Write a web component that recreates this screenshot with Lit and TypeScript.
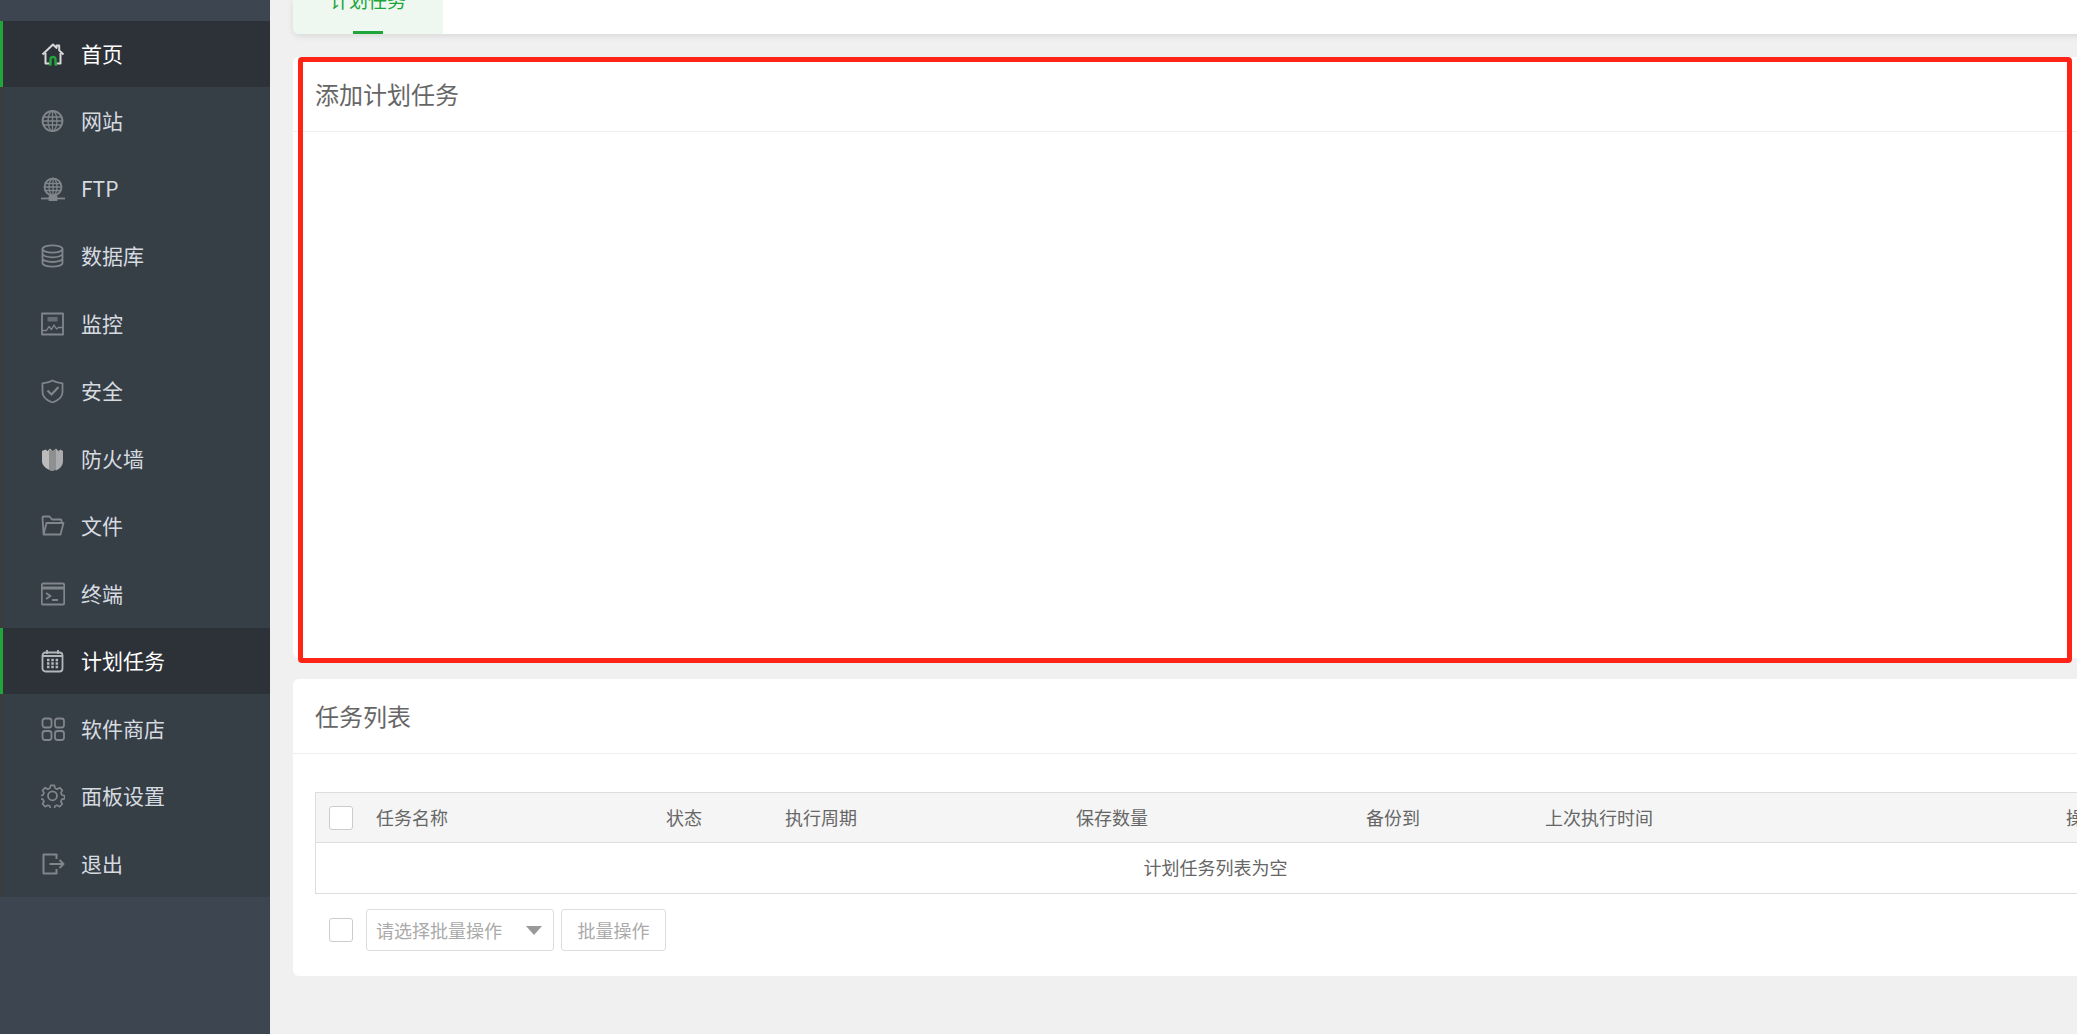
import { LitElement, html, css, svg } from "lit";
import { customElement } from "lit/decorators.js";

const icons: Record<string, unknown> = {
  home: svg`<path d="M1.500 12.500 12 2.500l3.600 3.400V3.600h2.600v4.800l4.300 4.100" class="l"/><path d="M4.500 11v10.500h4.500M19.500 11v10.500H15" class="l"/><path d="M8 22.500h1.500V17.500a2.500 2.500 0 0 1 5 0v5H16" class="g"/>`,
  globe: svg`<circle cx="11.500" cy="12" r="10"/><ellipse cx="11.500" cy="12" rx="4.500" ry="10" stroke-width="1.300"/><path d="M11.500 2v20M2.500 8h18M1.500 12h20M2.500 16h18" stroke-width="1.300"/>`,
  ftp: svg`<circle cx="12" cy="10" r="8.500"/><ellipse cx="12" cy="10" rx="4" ry="8.500" stroke-width="1.300"/><path d="M12 1.500v17M4.500 6.500h15M3.500 10h17M4.500 13.500h15" stroke-width="1.300"/><path d="M0 21.500h24"/><rect x="8.500" y="19.500" width="7" height="4" fill="#80868c"/>`,
  db: svg`<ellipse cx="11.500" cy="5" rx="10" ry="3.600"/><path d="M1.500 5v14c0 2 4.500 3.600 10 3.600s10-1.600 10-3.600V5M1.500 9.700c0 2 4.500 3.600 10 3.600s10-1.600 10-3.600M1.500 14.400c0 2 4.500 3.600 10 3.600s10-1.600 10-3.600"/>`,
  monitor: svg`<rect x="1" y="1.500" width="21" height="21"/><path d="M1.500 18.500h4l2.500-4 2.500 3 2.500-4.500 2.500 4 2-1.500h4" stroke-width="1.400"/><rect x="6.500" y="5" width="10" height="4.500" fill="#666d74" stroke="none"/>`,
  shield: svg`<path d="M11.500 1.500c3 1.800 6 2.600 10 2.800v9c0 4.600-4 8-10 10.200-6-2.200-10-5.600-10-10.200v-9c4-.2 7-1 10-2.800z"/><path d="m6.500 11.500 4 4 7-7.500" stroke-width="2.200"/>`,
  wall: svg`<path d="M1 4 4.500 2.500 6.500 4 9 1.500 11.500 4v20C5 22 1 18.500 1 14z" fill="#bcbcbc" stroke="none"/><path d="M8 2.500 11.500 4 15 1.500V23l-3.500 1C10 23.500 9 23 8 22.500z" fill="#8d8f91" stroke="none"/><path d="M15 1.500 17.500 4 19.500 2.500 22 4v10c0 4.500-3 8-7 9.500z" fill="#a9abad" stroke="none"/>`,
  folder: svg`<path d="M2.500 19.500 1.500 3.500c0-.6.400-1 1-1h6l2.500 3h8.500c.6 0 1 .4 1 1V9"/><path d="M2.500 20.500 5.500 9h17l-3 11.500z"/>`,
  term: svg`<rect x="0.800" y="1.500" width="22.400" height="21" rx="1.500"/><path d="M1 6h22" stroke-width="3"/><path d="m5 11 4.500 3L5 17M11 18h6" stroke-width="2"/>`,
  cal: svg`<rect x="1.500" y="3.500" width="20" height="19" rx="3" class="c"/><path d="M6 1v4M17 1v4M1.500 7h20" class="c"/><path d="M6 11h2.500M10.300 11h2.500M14.600 11h2.500M6 14.500h2.500M10.300 14.500h2.500M14.600 14.500h2.500M6 18h2.500M10.300 18h2.500M14.600 18h2.500" class="c" stroke-width="2.400"/>`,
  apps: svg`<rect x="1.500" y="1.500" width="9" height="9" rx="2.500"/><rect x="14" y="1.500" width="9" height="9" rx="2.500"/><rect x="1.500" y="14" width="9" height="9" rx="2.500"/><rect x="14" y="14" width="9" height="9" rx="2.500"/>`,
  gear: svg`<path d="M9.500 1.500h4l.8 3 2.200 1 2.800-1.600 2.700 2.900-1.500 2.700.9 2.200 3 .8v3l-3 .8-1 2.300 1.500 2.700-2.800 2.800-2.700-1.500-2.200.9-.8 3h-4l-.8-3-2.200-.9-2.700 1.500-2.800-2.800 1.500-2.700-1-2.300-3-.8v-3l3-.8 1-2.200-1.500-2.700 2.800-2.900 2.700 1.600 2.200-1z" transform="translate(.700 0) scale(.94)"/><circle cx="11.500" cy="11.800" r="4.500"/>`,
  exit: svg`<path d="M15.500 7V2.500h-13v19h13V17" stroke-width="2"/><path d="M8.500 12h14M18.500 8l4 4-4 4" stroke-width="2"/>`,
};

const menu: [string, string, boolean?][] = [
  ["home", "首页", true],
  ["globe", "网站"],
  ["ftp", "FTP"],
  ["db", "数据库"],
  ["monitor", "监控"],
  ["shield", "安全"],
  ["wall", "防火墙"],
  ["folder", "文件"],
  ["term", "终端"],
  ["cal", "计划任务", true],
  ["apps", "软件商店"],
  ["gear", "面板设置"],
  ["exit", "退出"],
];

const columns = ["任务名称", "状态", "执行周期", "保存数量", "备份到", "上次执行时间", "操作"];

@customElement("app-root")
export class AppRoot extends LitElement {
  static styles = css`
    :host {
      display: flex;
      width: 2077px;
      height: 1034px;
      overflow: hidden;
      background: #f0f0f0;
      font-family: "Noto Sans CJK SC", "Noto Sans", sans-serif;
      color: #666;
      position: relative;
    }
    .side {
      flex: none;
      width: 270px;
      height: 100%;
      padding-top: 21px;
      box-sizing: border-box;
      background: #3d4650;
    }
    .menu {
      border-left: 3px solid #3b3c3e;
      background: #363e46;
    }
    .item {
      display: flex;
      align-items: center;
      gap: 16px;
      height: 66px;
      margin-left: -3px;
      margin-bottom: 1.48px;
      box-sizing: border-box;
      border-left: 3px solid transparent;
      padding-left: 38px;
      font-size: 21px;
      color: #d6dbe0;
    }
    .item span { margin-top: -2px; }
    .item.active {
      background: #2d3138;
      border-left-color: #20a53a;
      color: #fff;
    }
    .ico {
      width: 24px;
      height: 24px;
      flex: none;
      fill: none;
      stroke: #80868c;
      stroke-width: 1.8;
      stroke-linejoin: round;
    }
    .ico .l { stroke: #d8d8d8; stroke-width: 2; }
    .ico .g { stroke: #20a53a; stroke-width: 2.4; }
    .ico .c { stroke: #b4b7ba; }
    .main {
      flex: none;
      width: 1845px;
      margin-left: 23px;
      display: flex;
      flex-direction: column;
    }
    .card {
      background: #fff;
      border-radius: 6px;
    }
    .tabs {
      height: 34px;
      border-radius: 0 0 6px 6px;
      box-shadow: 0 2px 6px rgba(0, 0, 0, 0.1);
      display: flex;
      align-items: flex-end;
      overflow: hidden;
      margin-bottom: 23px;
    }
    .tab {
      width: 150px;
      height: 34px;
      flex: none;
      display: flex;
      justify-content: center;
      background: #eef8f0;
      color: #20a53a;
      font-size: 19px;
      line-height: 26px;
      position: relative;
    }
    .tab span { margin-top: -13px; }
    .tab i {
      position: absolute;
      left: 60px;
      bottom: 0;
      width: 30px;
      height: 3px;
      background: #20a53a;
    }
    .add { height: 601px; margin-bottom: 21px; }
    .list { height: 297px; }
    .head {
      height: 75px;
      padding-left: 22px;
      box-sizing: border-box;
      border-bottom: 1px solid #eeeeee;
      font-size: 24px;
      line-height: 74px;
      color: #666;
    }
    .add .head { line-height: 73px; }
    .body { padding: 38px 22px 0; }
    .table {
      width: 1801px;
      border: 1px solid #dddddd;
      box-sizing: border-box;
      font-size: 18px;
    }
    .row {
      display: grid;
      grid-template-columns: 60px 290px 119px 291px 290px 179px 521px 1fr;
      align-items: center;
      height: 49px;
      background: #f5f5f5;
      border-bottom: 1px solid #dddddd;
    }
    .row div:not(.check) { margin-top: -2px; }
    .row .check { margin-left: 13px; }
    .empty {
      height: 50px;
      line-height: 48px;
      text-align: center;
    }
    .check {
      width: 24px;
      height: 24px;
      box-sizing: border-box;
      border: 1px solid #cccccc;
      border-radius: 3px;
      background: #fff;
      flex: none;
    }
    .batch {
      display: flex;
      align-items: center;
      gap: 7px;
      margin-top: 15px;
      padding-left: 14px;
      font-size: 18px;
      color: #aaa;
    }
    .batch .check { margin-right: 6px; }
    .control {
      height: 42px;
      box-sizing: border-box;
      border: 1px solid #dddddd;
      border-radius: 3px;
      display: flex;
      align-items: center;
      background: #fff;
    }
    .select {
      width: 188px;
      padding-left: 9px;
      justify-content: space-between;
    }
    .caret {
      width: 0;
      height: 0;
      margin-right: 11px;
      border: 8px solid transparent;
      border-top: 9px solid #999;
      border-bottom: 0;
    }
    .btn {
      width: 105px;
      justify-content: center;
    }
    .mark {
      position: absolute;
      left: 298px;
      top: 57px;
      width: 1774px;
      height: 606px;
      box-sizing: border-box;
      border: 5px solid #ff2416;
      border-radius: 4px;
      pointer-events: none;
    }
  `;

  render() {
    return html`
      <aside class="side">
        <nav class="menu">
          ${menu.map(
            ([icon, label, active]) => html`
              <div class="item ${active ? "active" : ""}">
                <svg class="ico" viewBox="0 0 24 24">${icons[icon]}</svg>
                <span>${label}</span>
              </div>
            `
          )}
        </nav>
      </aside>
      <main class="main">
        <section class="card tabs">
          <div class="tab"><span>计划任务</span><i></i></div>
        </section>
        <section class="card add">
          <div class="head">添加计划任务</div>
        </section>
        <section class="card list">
          <div class="head">任务列表</div>
          <div class="body">
            <div class="table">
              <div class="row">
                <div class="check"></div>
                ${columns.map((c) => html`<div>${c}</div>`)}
              </div>
              <div class="empty">计划任务列表为空</div>
            </div>
            <div class="batch">
              <div class="check"></div>
              <div class="control select"><span>请选择批量操作</span><span class="caret"></span></div>
              <div class="control btn">批量操作</div>
            </div>
          </div>
        </section>
      </main>
      <div class="mark"></div>
    `;
  }
}
